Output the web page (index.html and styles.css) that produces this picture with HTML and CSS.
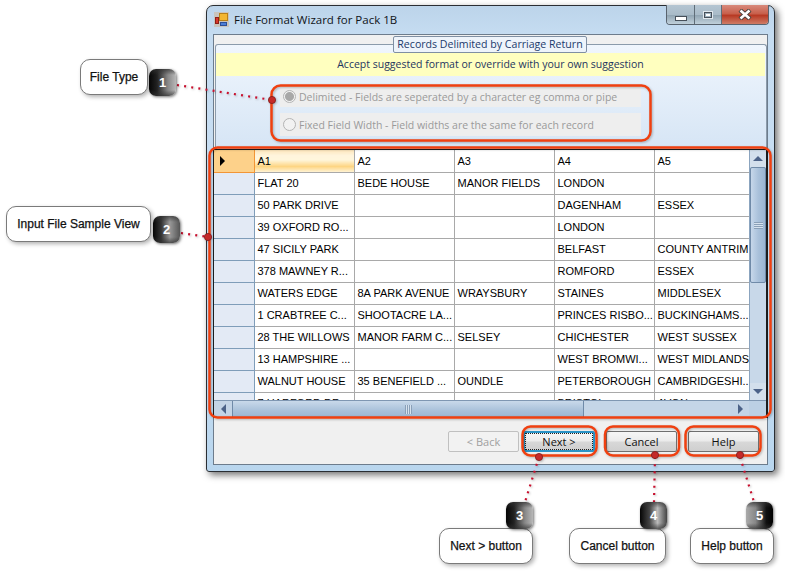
FILE: index.html
```html
<!DOCTYPE html>
<html lang="en">
<head>
    <meta charset="UTF-8">
    <title>File Format Wizard</title>
    <link rel="stylesheet" href="styles.css">
</head>
<body>
    <div class="window">
        <div class="titlebar">
            <svg class="app-icon" width="15" height="15" viewBox="0 0 15 15">
                <rect x="0" y="0" width="15" height="15" fill="#c9c4bc"/>
                <rect x="5.5" y="1.5" width="8" height="7" fill="#f2b632" stroke="#b8801a"/>
                <rect x="1.5" y="5.5" width="3" height="6" fill="#d8382c" stroke="#8c2018"/>
                <rect x="6.5" y="10.5" width="6" height="3" fill="#4c7fd8" stroke="#2c4f98"/>
            </svg>
            <span class="title">File Format Wizard for Pack 1B</span>
            <div class="caption-buttons">
                <div class="cap-btn cap-min"><span class="min-glyph"></span></div>
                <div class="cap-btn cap-max"><span class="max-glyph"></span></div>
                <div class="cap-btn cap-close">
                    <svg width="14" height="11" viewBox="0 0 14 11">
                        <path d="M2 1 L12 10 M12 1 L2 10" stroke="#47403c" stroke-width="4.4"/>
                        <path d="M2.5 1.5 L11.5 9.5 M11.5 1.5 L2.5 9.5" stroke="#fff" stroke-width="2.6"/>
                    </svg>
                </div>
            </div>
        </div>
        <div class="client">
            <div class="tab-head"><span class="tab-label">Records Delimited by Carriage Return</span></div>
            <div class="tab-page">
                <div class="hint">Accept suggested format or override with your own suggestion</div>
                <div class="radio-box">
                    <div class="radio-row"><span class="radio checked"></span>Delimited - Fields are seperated by a character eg comma or pipe</div>
                    <div class="radio-row"><span class="radio"></span>Fixed Field Width - Field widths are the same for each record</div>
                </div>
            </div>
            <div class="grid">
                <div class="grid-main">
                    <div class="grid-view">
                        <table class="data">
                            <colgroup><col class="col-head"><col class="col-std"><col class="col-std"><col class="col-std"><col class="col-std"><col class="col-last"></colgroup>
                            <tr class="head"><th class="current"><span class="arrow"></span></th><td class="selected">A1</td><td>A2</td><td>A3</td><td>A4</td><td>A5</td></tr>
                            <tr><th></th><td>FLAT 20</td><td>BEDE HOUSE</td><td>MANOR FIELDS</td><td>LONDON</td><td></td></tr>
                            <tr><th></th><td>50 PARK DRIVE</td><td></td><td></td><td>DAGENHAM</td><td>ESSEX</td></tr>
                            <tr><th></th><td>39 OXFORD RO...</td><td></td><td></td><td>LONDON</td><td></td></tr>
                            <tr><th></th><td>47 SICILY PARK</td><td></td><td></td><td>BELFAST</td><td>COUNTY ANTRIM</td></tr>
                            <tr><th></th><td>378 MAWNEY R...</td><td></td><td></td><td>ROMFORD</td><td>ESSEX</td></tr>
                            <tr><th></th><td>WATERS EDGE</td><td>8A PARK AVENUE</td><td>WRAYSBURY</td><td>STAINES</td><td>MIDDLESEX</td></tr>
                            <tr><th></th><td>1 CRABTREE C...</td><td>SHOOTACRE LA...</td><td></td><td>PRINCES RISBO...</td><td>BUCKINGHAMS...</td></tr>
                            <tr><th></th><td>28 THE WILLOWS</td><td>MANOR FARM C...</td><td>SELSEY</td><td>CHICHESTER</td><td>WEST SUSSEX</td></tr>
                            <tr><th></th><td>13 HAMPSHIRE ...</td><td></td><td></td><td>WEST BROMWI...</td><td>WEST MIDLANDS</td></tr>
                            <tr><th></th><td>WALNUT HOUSE</td><td>35 BENEFIELD ...</td><td>OUNDLE</td><td>PETERBOROUGH</td><td>CAMBRIDGESHI...</td></tr>
                            <tr><th></th><td>7 HARFORD DR</td><td></td><td></td><td>BRISTOL</td><td>AVON</td></tr>
                        </table>
                    </div>
                    <div class="vscroll">
                        <div class="sb-btn"><span class="tri-up"></span></div>
                        <div class="v-thumb"><span class="v-grip"></span></div>
                        <div class="v-track"></div>
                        <div class="sb-btn"><span class="tri-down"></span></div>
                    </div>
                </div>
                <div class="hscroll">
                    <div class="sb-btn-h"><span class="tri-left"></span></div>
                    <div class="h-thumb"><span class="h-grip"></span></div>
                    <div class="h-track"></div>
                    <div class="sb-btn-h"><span class="tri-right"></span></div>
                    <div class="corner"></div>
                </div>
            </div>
            <div class="buttons">
                <button class="btn back" disabled>&lt; Back</button>
                <button class="btn next"><span class="focus">Next &gt;</span></button>
                <button class="btn cancel">Cancel</button>
                <button class="btn help">Help</button>
            </div>
        </div>
    </div>

    <!-- annotation layer -->
    <svg class="leaders" width="785" height="577" viewBox="0 0 785 577">
        <g fill="none" stroke="#f04010" stroke-width="2.5">
            <rect x="271.5" y="85.5" width="379" height="55" rx="9"/>
            <rect x="209.5" y="147.5" width="561" height="270" rx="8"/>
            <rect x="522.5" y="426.5" width="74" height="29" rx="8"/>
            <rect x="605" y="426.5" width="74" height="29" rx="8"/>
            <rect x="685.5" y="426.5" width="75" height="29" rx="8"/>
        </g>
        <g fill="none" stroke="#c8102e" stroke-width="2.2" stroke-dasharray="2 5.2">
            <path d="M177 85 L272 100"/>
            <path d="M181 233 L208 237"/>
            <path d="M539 457 L525 502"/>
            <path d="M655 457 L654 502"/>
            <path d="M740 457 L754 502"/>
        </g>
        <g fill="#c42a2a" stroke="#7c1c1c" stroke-width="0.8">
            <circle cx="272" cy="100" r="3.6"/>
            <circle cx="208" cy="237" r="3.6"/>
            <circle cx="539" cy="457" r="3.6"/>
            <circle cx="655" cy="455" r="3.6"/>
            <circle cx="740" cy="455" r="3.6"/>
        </g>
    </svg>

    <div class="callout c-type">File Type</div>
    <div class="badge b-1 grad-a">1</div>
    <div class="callout c-input">Input File Sample View</div>
    <div class="badge b-2 grad-b">2</div>
    <div class="callout c-next">Next &gt; button</div>
    <div class="badge b-3 grad-a">3</div>
    <div class="callout c-cancel">Cancel button</div>
    <div class="badge b-4 grad-d">4</div>
    <div class="callout c-help">Help button</div>
    <div class="badge b-5 grad-c">5</div>
</body>
</html>
```
FILE: styles.css
```css
html, body {
    margin: 0;
    padding: 0;
    background: #fff;
}
body {
    width: 785px;
    height: 577px;
    position: relative;
    overflow: hidden;
    font-family: "Liberation Sans", Arial, sans-serif;
    font-size: 12px;
}

/* window */
.window {
    position: absolute;
    left: 206px;
    top: 5px;
    width: 569px;
    height: 467px;
    box-sizing: border-box;
    padding: 0 6px 6px;
    display: flex;
    flex-direction: column;
    border: 1px solid #2a2e33;
    border-radius: 7px 7px 3px 3px;
    background: linear-gradient(180deg, #bcd4ea 0%, #c5dcf1 6%, #c9dff3 60%, #b9d6ee 100%);
    box-shadow: 3px 3px 7px rgba(0, 0, 0, 0.55);
}
.titlebar {
    height: 28px;
    flex: none;
    display: flex;
    align-items: center;
    position: relative;
}
.app-icon {
    margin: -2px 5px 0 1px;
}
.title {
    margin-top: -2px;
    font-family: "Open Sans", sans-serif;
    font-size: 11.5px;
    color: #101418;
}
.caption-buttons {
    position: absolute;
    right: -1px;
    top: -1px;
    height: 19px;
    display: flex;
    border: 1px solid #59636e;
    border-top: none;
    border-radius: 0 0 4px 4px;
    overflow: hidden;
}
.cap-btn {
    display: flex;
    align-items: center;
    justify-content: center;
    height: 19px;
    background: linear-gradient(180deg, #b4c5d2 0%, #a9bbc8 50%, #8fa3b1 52%, #c0d0da 100%);
}
.cap-min {
    width: 27px;
    border-right: 1px solid #5f6d78;
}
.cap-max {
    width: 26px;
    border-right: 1px solid #5f6d78;
}
.cap-close {
    width: 46px;
    background: linear-gradient(180deg, #d88a7c 0%, #c8604c 45%, #b83a24 55%, #cf7c66 100%);
}
.min-glyph {
    width: 10px;
    height: 3px;
    margin-top: 7px;
    background: #fff;
    border: 1px solid #47505a;
}
.max-glyph {
    width: 6px;
    height: 4px;
    background: #fff;
    border: 1px solid #47505a;
    box-shadow: inset 0 0 0 1px #9fb2bf, 0 0 0 1px #e0e8ee;
}

.client {
    flex: 1;
    min-height: 0;
    display: flex;
    flex-direction: column;
    border: 1px solid #6d7c8c;
    background: #f0f0f0;
    position: relative;
}
.tab-head {
    height: 9px;
    flex: none;
    position: relative;
}
.tab-label {
    position: absolute;
    left: 179px;
    top: 1px;
    width: 194px;
    height: 17px;
    line-height: 15px;
    text-align: center;
    box-sizing: border-box;
    border: 1px solid #7f8fa3;
    border-radius: 2px;
    background: #eef4fb;
    color: #1b3a6b;
    font-family: "Open Sans", sans-serif;
    font-size: 10.6px;
    white-space: nowrap;
    z-index: 1;
}
.tab-page {
    height: 105px;
    flex: none;
    box-sizing: border-box;
    margin: 0 0 0 1px;
    padding: 8px 1px 0 0;
    border: 1px solid #8b9bab;
    border-bottom: none;
    border-radius: 3px 3px 0 0;
    background: linear-gradient(180deg, #f0f6fd 0%, #d6e5f5 100%);
}
.hint {
    height: 23px;
    line-height: 23px;
    text-align: center;
    background: #ffffbf;
    color: #1e3560;
    font-family: "Open Sans", sans-serif;
    font-size: 10.5px;
}
.radio-box {
    display: flex;
    flex-direction: column;
    gap: 6px;
    margin: 10px 124px 0 64px;
}
.radio-row {
    height: 23px;
    display: flex;
    align-items: center;
    background: #eeeeee;
    color: #9a9a9a;
    font-family: "Open Sans", sans-serif;
    font-size: 10.5px;
    white-space: nowrap;
}
.radio-row:first-child {
    height: 21px;
}
.radio {
    width: 11px;
    height: 11px;
    margin: 0 3px;
    flex: none;
    border: 1px solid #b4b4b4;
    border-radius: 50%;
    background: #f2f2f2;
    box-sizing: content-box;
}
.radio.checked {
    background: radial-gradient(circle, #a8a8a8 0 4px, #f2f2f2 5px);
}

/* data grid */
.grid {
    height: 269px;
    flex: none;
    display: flex;
    flex-direction: column;
    margin: 0 -1px 0 -1px;
    border: 1px solid #1c1c1c;
    border-right-width: 2px;
    background: #fff;
    box-sizing: border-box;
}
.grid-main {
    height: 250px;
    flex: none;
    display: flex;
}
.grid-view {
    width: 537px;
    overflow: hidden;
}
.data {
    border-collapse: collapse;
    table-layout: fixed;
    width: 537px;
    color: #000;
    font-size: 11px;
}
.col-head { width: 40px; }
.col-std { width: 100px; }
.col-last { width: 97px; }
.data tr {
    height: 22px;
}
.data th {
    padding: 0;
    background: #e3eaf5;
    border-right: 1px solid #7f9db9;
    border-bottom: 1px solid #7f9db9;
}
.data th.current {
    background: #fdd18a;
    border-right-color: #f29536;
    border-bottom-color: #f29536;
}
.data td {
    padding: 0 0 0 3px;
    border-right: 1px solid #a9a9a9;
    border-bottom: 1px solid #a9a9a9;
    white-space: nowrap;
    overflow: hidden;
}
.data tr td:last-child {
    border-right: none;
}
.data td.selected {
    background: linear-gradient(180deg, #fde6bc 0%, #fff4dc 25%, #fff6dc 45%, #fdd583 75%, #fff3d4 100%);
}
.arrow {
    display: block;
    width: 0;
    height: 0;
    margin-left: 6px;
    border-left: 5px solid #000;
    border-top: 5px solid transparent;
    border-bottom: 5px solid transparent;
}
.vscroll {
    width: 17px;
    display: flex;
    flex-direction: column;
    background: #bcd0e4;
    border-left: 1px solid #8ba4bf;
    box-sizing: border-box;
}
.sb-btn {
    height: 17px;
    flex: none;
    display: flex;
    align-items: center;
    justify-content: center;
    background: #d3dfec;
}
.v-thumb {
    height: 116px;
    flex: none;
    display: flex;
    align-items: center;
    justify-content: center;
    box-sizing: border-box;
    border: 1px solid #6f8aa8;
    border-radius: 2px;
    background: linear-gradient(90deg, #c6d7ea 0%, #a8c0da 55%, #9ab5d2 100%);
}
.v-track {
    flex: 1;
    background: #c8d8e9;
}
.v-grip {
    width: 9px;
    height: 7px;
    background: repeating-linear-gradient(180deg, #8aa0b8 0 1px, #d6e2ee 1px 2px);
}
.tri-up, .tri-down {
    width: 0;
    height: 0;
    border-left: 5px solid transparent;
    border-right: 5px solid transparent;
}
.tri-up {
    border-bottom: 5px solid #4c6288;
}
.tri-down {
    border-top: 5px solid #4c6288;
}
.hscroll {
    height: 17px;
    flex: none;
    display: flex;
    border-top: 1px solid #7f97b2;
    background: #bcd0e4;
    box-sizing: border-box;
}
.sb-btn-h {
    width: 18px;
    flex: none;
    display: flex;
    align-items: center;
    justify-content: center;
    background: #c3d4e6;
}
.h-thumb {
    width: 352px;
    flex: none;
    display: flex;
    align-items: center;
    justify-content: center;
    box-sizing: border-box;
    border-left: 1px solid #6f8aa8;
    border-right: 1px solid #6f8aa8;
    background: linear-gradient(180deg, #c9d9ea 0%, #a9c1da 60%, #9bb6d3 100%);
}
.h-grip {
    width: 7px;
    height: 9px;
    background: repeating-linear-gradient(90deg, #8aa0b8 0 1px, #d6e2ee 1px 2px);
}
.h-track {
    flex: 1;
    background: #c4d5e7;
}
.tri-left, .tri-right {
    width: 0;
    height: 0;
    border-top: 5px solid transparent;
    border-bottom: 5px solid transparent;
}
.tri-left {
    border-right: 5px solid #4c6288;
}
.tri-right {
    border-left: 5px solid #4c6288;
}
.corner {
    width: 17px;
    flex: none;
    background: #bcd0e4;
}

/* buttons */
.buttons {
    flex: 1;
    display: flex;
    padding: 12px 0 0 234px;
    border-top: 1px solid #fff;
}
.btn {
    width: 71px;
    height: 21px;
    margin-right: 4px;
    padding: 0;
    border: 1px solid #6f6f6f;
    border-radius: 2px;
    background: linear-gradient(180deg, #f6f6f6 0%, #ebebeb 48%, #d8d8d8 52%, #cfcfcf 100%);
    color: #111;
    font-family: "Open Sans", sans-serif;
    font-size: 11px;
}
.btn.back {
    color: #a0a0a0;
    border-color: #c0c0c0;
    background: #f2f2f2;
}
.btn.next {
    width: 72px;
    margin-right: 11px;
    border: 2px solid #2a93c6;
}
.btn.next .focus {
    display: block;
    margin: 0 1px;
    line-height: 15px;
    outline: 1px dotted #222;
}
.btn.cancel {
    margin-right: 11px;
}

/* annotation layer */
.leaders {
    position: absolute;
    left: 0;
    top: 0;
    filter: drop-shadow(1px 1px 1px rgba(0, 0, 0, 0.25));
}
.callout {
    position: absolute;
    height: 36px;
    line-height: 35px;
    box-sizing: border-box;
    text-align: center;
    background: #fff;
    border: 1px solid #7a7a7a;
    border-radius: 10px;
    box-shadow: 2px 2px 4px rgba(0, 0, 0, 0.3);
    color: #111;
    -webkit-text-stroke: 0.25px #111;
    white-space: nowrap;
}
.c-type { left: 80px; top: 59px; width: 68px; }
.c-input { left: 6px; top: 206px; width: 145px; }
.c-next { left: 439px; top: 528px; width: 94px; }
.c-cancel { left: 569px; top: 528px; width: 97px; }
.c-help { left: 690px; top: 528px; width: 84px; }
.badge {
    position: absolute;
    width: 27px;
    height: 27px;
    line-height: 27px;
    text-align: center;
    border-radius: 7px;
    color: #fff;
    font-weight: bold;
    font-size: 13px;
    box-shadow: 1px 1px 3px rgba(0, 0, 0, 0.55);
}
.grad-a { background: linear-gradient(180deg, rgba(50, 50, 50, 0.7) 0%, rgba(50, 50, 50, 0) 22%, rgba(50, 50, 50, 0) 78%, rgba(50, 50, 50, 0.7) 100%), linear-gradient(90deg, #050505 0%, #222 30%, #888 70%, #b8b8b8 100%); }
.grad-b { background: linear-gradient(180deg, rgba(50, 50, 50, 0.7) 0%, rgba(50, 50, 50, 0) 22%, rgba(50, 50, 50, 0) 78%, rgba(50, 50, 50, 0.7) 100%), linear-gradient(90deg, #050505 0%, #333 30%, #999 62%, #555 100%); }
.grad-c { background: linear-gradient(180deg, rgba(50, 50, 50, 0.7) 0%, rgba(50, 50, 50, 0) 22%, rgba(50, 50, 50, 0) 78%, rgba(50, 50, 50, 0.7) 100%), linear-gradient(90deg, #aaa 0%, #888 35%, #111 75%, #000 100%); }
.grad-d { background: linear-gradient(180deg, rgba(50, 50, 50, 0.7) 0%, rgba(50, 50, 50, 0) 22%, rgba(50, 50, 50, 0) 78%, rgba(50, 50, 50, 0.7) 100%), linear-gradient(90deg, #050505 0%, #444 35%, #bbb 65%, #444 100%); }
.b-1 { left: 149px; top: 69px; }
.b-2 { left: 153px; top: 216px; }
.b-3 { left: 506px; top: 502px; }
.b-4 { left: 640px; top: 502px; }
.b-5 { left: 746px; top: 502px; }
```
